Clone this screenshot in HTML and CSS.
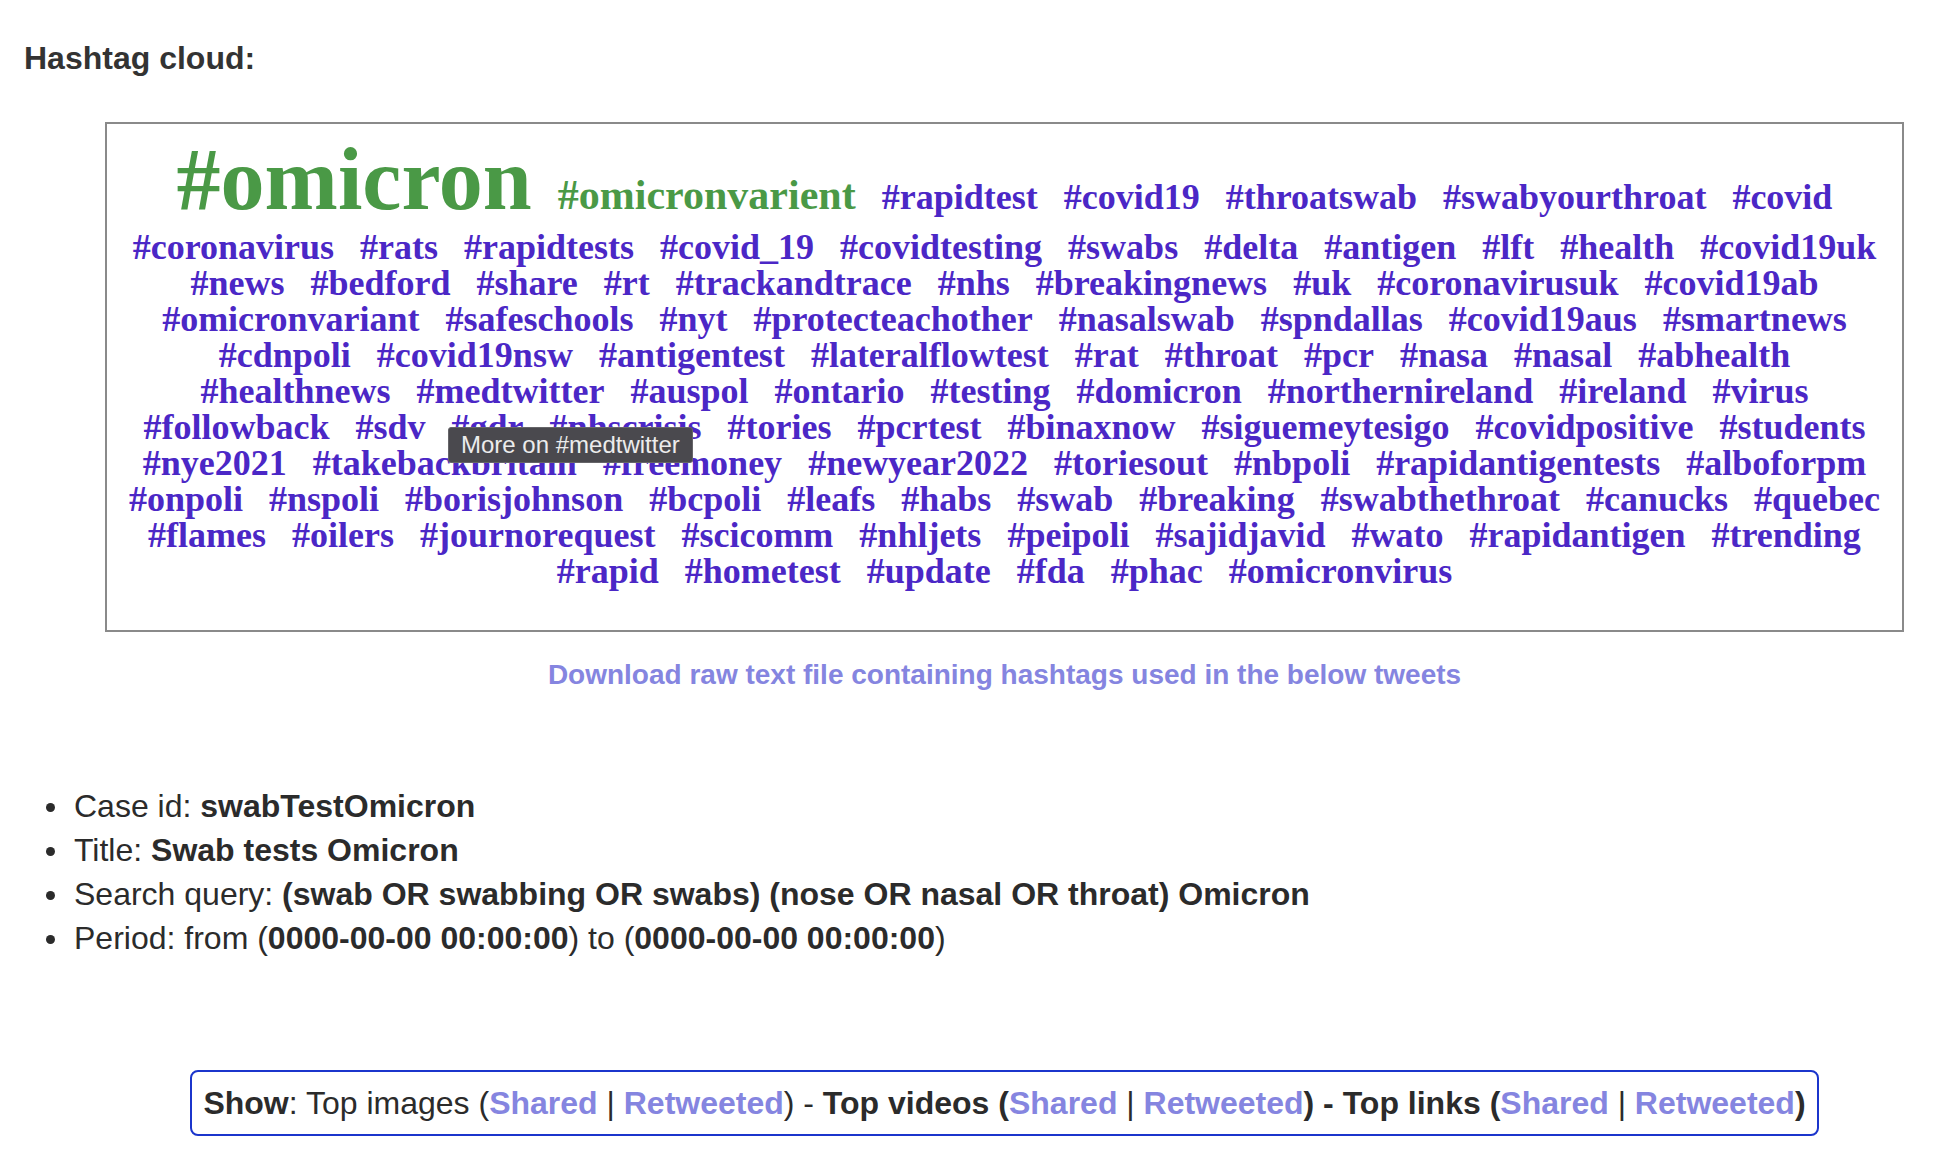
FILE: index.html
```html
<!DOCTYPE html>
<html lang="en">
<head>
<meta charset="utf-8">
<title>Hashtag cloud</title>
<link rel="stylesheet" href="styles.css">
</head>
<body>
<div class="page">
  <h3 class="cloud-title">Hashtag cloud:</h3>
  <div class="cloud-wrap">
    <div class="cloud">
      <div class="row row-top">
        <a class="tag tag-xl" href="#">#omicron</a>
        <a class="tag tag-lg" href="#">#omicronvarient</a>
        <a class="tag" href="#">#rapidtest</a>
        <a class="tag" href="#">#covid19</a>
        <a class="tag" href="#">#throatswab</a>
        <a class="tag" href="#">#swabyourthroat</a>
        <a class="tag" href="#">#covid</a>
      </div>
      <div class="row">
        <a class="tag" href="#">#coronavirus</a>
        <a class="tag" href="#">#rats</a>
        <a class="tag" href="#">#rapidtests</a>
        <a class="tag" href="#">#covid_19</a>
        <a class="tag" href="#">#covidtesting</a>
        <a class="tag" href="#">#swabs</a>
        <a class="tag" href="#">#delta</a>
        <a class="tag" href="#">#antigen</a>
        <a class="tag" href="#">#lft</a>
        <a class="tag" href="#">#health</a>
        <a class="tag" href="#">#covid19uk</a>
      </div>
      <div class="row">
        <a class="tag" href="#">#news</a>
        <a class="tag" href="#">#bedford</a>
        <a class="tag" href="#">#share</a>
        <a class="tag" href="#">#rt</a>
        <a class="tag" href="#">#trackandtrace</a>
        <a class="tag" href="#">#nhs</a>
        <a class="tag" href="#">#breakingnews</a>
        <a class="tag" href="#">#uk</a>
        <a class="tag" href="#">#coronavirusuk</a>
        <a class="tag" href="#">#covid19ab</a>
      </div>
      <div class="row">
        <a class="tag" href="#">#omicronvariant</a>
        <a class="tag" href="#">#safeschools</a>
        <a class="tag" href="#">#nyt</a>
        <a class="tag" href="#">#protecteachother</a>
        <a class="tag" href="#">#nasalswab</a>
        <a class="tag" href="#">#spndallas</a>
        <a class="tag" href="#">#covid19aus</a>
        <a class="tag" href="#">#smartnews</a>
      </div>
      <div class="row">
        <a class="tag" href="#">#cdnpoli</a>
        <a class="tag" href="#">#covid19nsw</a>
        <a class="tag" href="#">#antigentest</a>
        <a class="tag" href="#">#lateralflowtest</a>
        <a class="tag" href="#">#rat</a>
        <a class="tag" href="#">#throat</a>
        <a class="tag" href="#">#pcr</a>
        <a class="tag" href="#">#nasa</a>
        <a class="tag" href="#">#nasal</a>
        <a class="tag" href="#">#abhealth</a>
      </div>
      <div class="row">
        <a class="tag" href="#">#healthnews</a>
        <a class="tag" href="#">#medtwitter</a>
        <a class="tag" href="#">#auspol</a>
        <a class="tag" href="#">#ontario</a>
        <a class="tag" href="#">#testing</a>
        <a class="tag" href="#">#domicron</a>
        <a class="tag" href="#">#northernireland</a>
        <a class="tag" href="#">#ireland</a>
        <a class="tag" href="#">#virus</a>
      </div>
      <div class="row">
        <a class="tag" href="#">#followback</a>
        <a class="tag" href="#">#sdv</a>
        <a class="tag" href="#">#gdr</a>
        <a class="tag" href="#">#nhscrisis</a>
        <a class="tag" href="#">#tories</a>
        <a class="tag" href="#">#pcrtest</a>
        <a class="tag" href="#">#binaxnow</a>
        <a class="tag" href="#">#siguemeytesigo</a>
        <a class="tag" href="#">#covidpositive</a>
        <a class="tag" href="#">#students</a>
      </div>
      <div class="row">
        <a class="tag" href="#">#nye2021</a>
        <a class="tag" href="#">#takebackbritain</a>
        <a class="tag" href="#">#freemoney</a>
        <a class="tag" href="#">#newyear2022</a>
        <a class="tag" href="#">#toriesout</a>
        <a class="tag" href="#">#nbpoli</a>
        <a class="tag" href="#">#rapidantigentests</a>
        <a class="tag" href="#">#alboforpm</a>
      </div>
      <div class="row">
        <a class="tag" href="#">#onpoli</a>
        <a class="tag" href="#">#nspoli</a>
        <a class="tag" href="#">#borisjohnson</a>
        <a class="tag" href="#">#bcpoli</a>
        <a class="tag" href="#">#leafs</a>
        <a class="tag" href="#">#habs</a>
        <a class="tag" href="#">#swab</a>
        <a class="tag" href="#">#breaking</a>
        <a class="tag" href="#">#swabthethroat</a>
        <a class="tag" href="#">#canucks</a>
        <a class="tag" href="#">#quebec</a>
      </div>
      <div class="row">
        <a class="tag" href="#">#flames</a>
        <a class="tag" href="#">#oilers</a>
        <a class="tag" href="#">#journorequest</a>
        <a class="tag" href="#">#scicomm</a>
        <a class="tag" href="#">#nhljets</a>
        <a class="tag" href="#">#peipoli</a>
        <a class="tag" href="#">#sajidjavid</a>
        <a class="tag" href="#">#wato</a>
        <a class="tag" href="#">#rapidantigen</a>
        <a class="tag" href="#">#trending</a>
      </div>
      <div class="row">
        <a class="tag" href="#">#rapid</a>
        <a class="tag" href="#">#hometest</a>
        <a class="tag" href="#">#update</a>
        <a class="tag" href="#">#fda</a>
        <a class="tag" href="#">#phac</a>
        <a class="tag" href="#">#omicronvirus</a>
      </div>
    </div>
    <p class="download"><a href="#">Download raw text file containing hashtags used in the below tweets</a></p>
  </div>

  <ul class="case-info">
    <li>Case id: <b>swabTestOmicron</b></li>
    <li>Title: <b>Swab tests Omicron</b></li>
    <li>Search query: <b>(swab OR swabbing OR swabs) (nose OR nasal OR throat) Omicron</b></li>
    <li>Period: from (<b>0000-00-00 00:00:00</b>) to (<b>0000-00-00 00:00:00</b>)</li>
  </ul>

  <div class="show-wrap">
    <div class="show-box"><b>Show</b>: Top images (<a href="#">Shared</a> | <a href="#">Retweeted</a>) - <b>Top videos (</b><a href="#">Shared</a> | <a href="#">Retweeted</a><b>) - Top links (</b><a href="#">Shared</a> | <a href="#">Retweeted</a><b>)</b></div>
  </div>
</div>
<div class="tooltip">More on #medtwitter</div>
</body>
</html>
```

FILE: styles.css
```css
html, body {
  margin: 0;
  padding: 0;
  background: #ffffff;
}

body {
  position: relative;
  font-family: "Liberation Sans", Arial, Helvetica, sans-serif;
  color: #2b2b2b;
}

.page {
  padding: 40px 47px 40px 24px;
}

.cloud-title {
  margin: 0;
  font-size: 32px;
  line-height: 37px;
  font-weight: bold;
  color: #333333;
}

.cloud-wrap {
  margin: 45px 0 0 81px;
}

.cloud {
  border: 2px solid #8a8a8a;
  padding: 12px 10px 41px;
}

.row {
  display: flex;
  justify-content: center;
  align-items: baseline;
  gap: 26px;
  white-space: nowrap;
  line-height: 36px;
}

.row-top {
  margin-bottom: 4.5px;
}

.tag {
  font-family: "Liberation Serif", "Times New Roman", serif;
  font-weight: bold;
  font-size: 36px;
  line-height: 36px;
  color: #4b27c6;
  text-decoration: none;
}

.tag-xl {
  font-size: 88px;
  line-height: 88px;
  color: #4a9946;
}

.tag-lg {
  font-size: 42px;
  line-height: 42px;
  color: #4a9946;
}

.download {
  margin: 27px 0 0;
  text-align: center;
  font-size: 28px;
  line-height: 32px;
  font-weight: bold;
}

.download a {
  color: #8585e0;
  text-decoration: none;
}

.case-info {
  margin: 93px 0 0;
  padding-left: 50px;
  list-style: none;
  font-size: 32px;
  line-height: 44px;
  color: #2b2b2b;
}

.case-info li::before {
  content: "";
  display: inline-block;
  width: 9px;
  height: 9px;
  margin-left: -28px;
  margin-right: 19px;
  border-radius: 50%;
  background: #2b2b2b;
  vertical-align: 5px;
}

.show-wrap {
  margin: 110px 0 0 81px;
  text-align: center;
}

.show-box {
  display: inline-block;
  border: 2px solid #1b35cc;
  border-radius: 8px;
  padding: 10px 11px;
  font-size: 32px;
  line-height: 42px;
  color: #2b2b2b;
  white-space: nowrap;
}

.show-box a {
  color: #8585e0;
  font-weight: bold;
  text-decoration: none;
}

.tooltip {
  position: absolute;
  left: 448px;
  top: 427px;
  box-sizing: border-box;
  width: 245px;
  height: 36px;
  padding: 0 12px;
  background: #4a494e;
  border: 1px solid #666569;
  border-radius: 3px;
  color: #ececec;
  font-family: "Liberation Sans", Arial, sans-serif;
  font-size: 24px;
  line-height: 34px;
  white-space: nowrap;
}
```
